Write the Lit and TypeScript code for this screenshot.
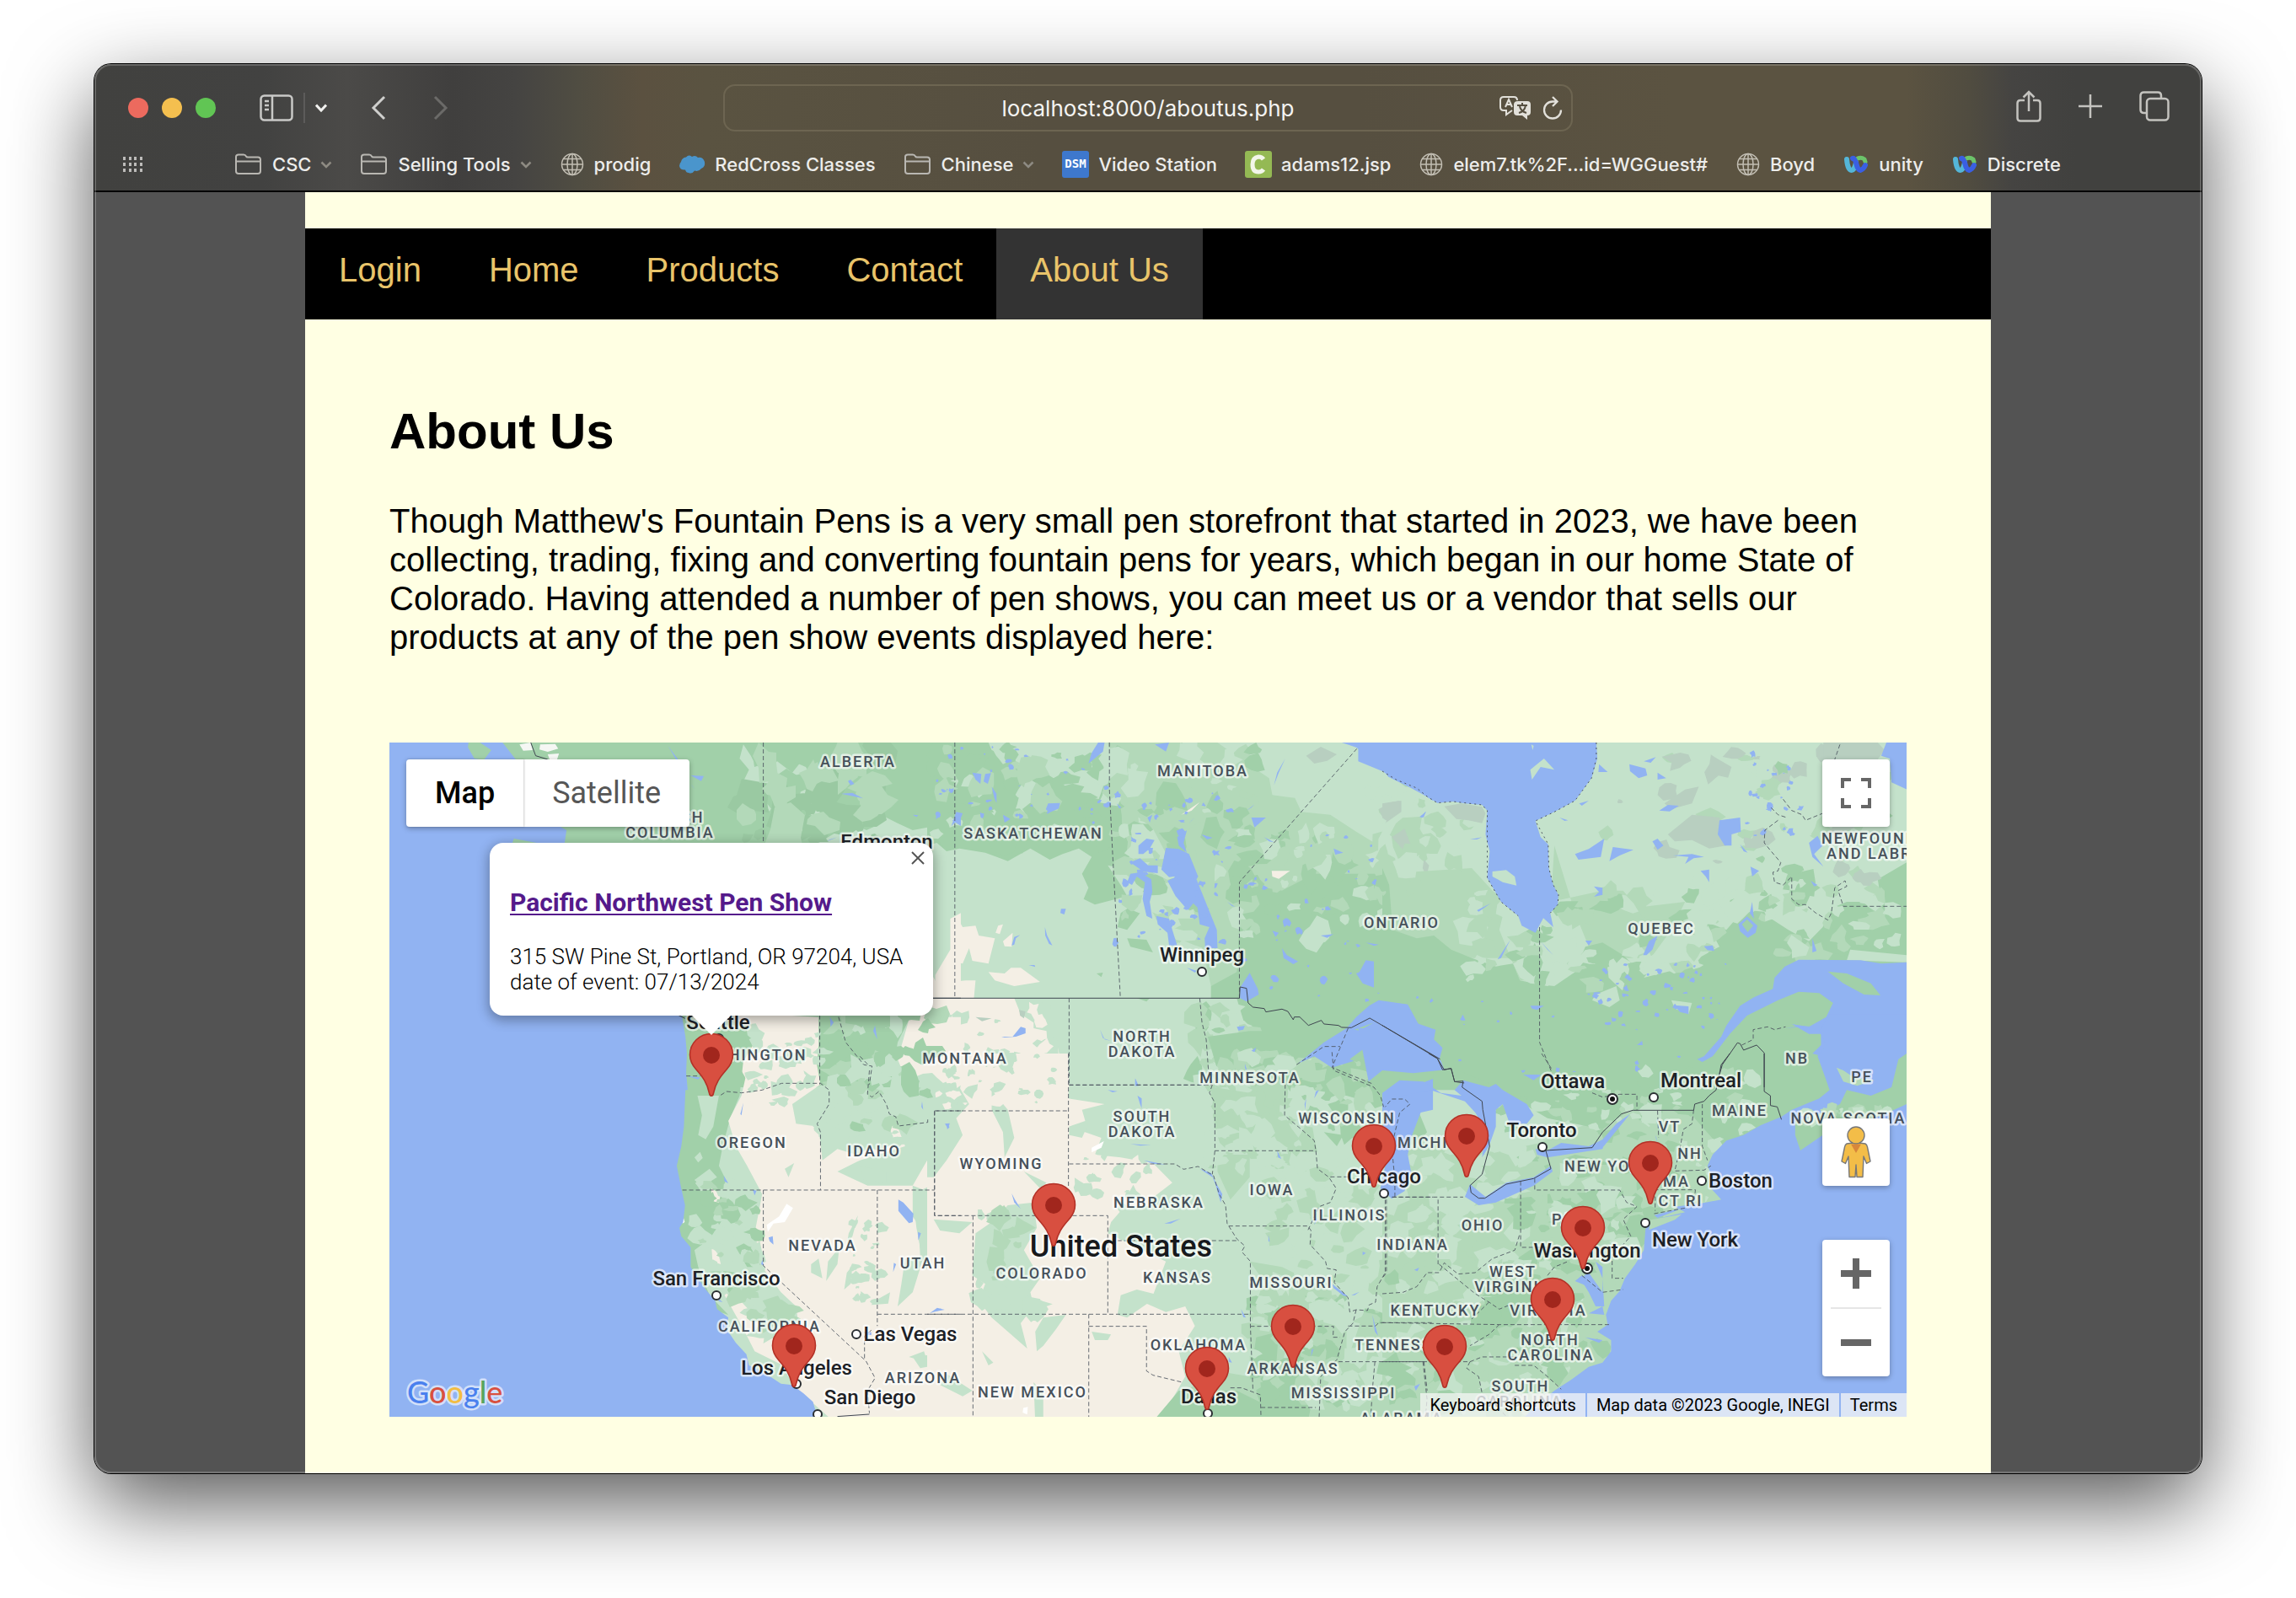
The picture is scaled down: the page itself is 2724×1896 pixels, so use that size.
import { LitElement, html, svg, css } from "lit";
import { customElement } from "lit/decorators.js";
import { classMap } from "lit/directives/class-map.js";

type Pt = [number, number];

const C = {
  water: "#91b3f2",
  light: "#c4e2cb",
  mid: "#b3d9b9",
  dark: "#a1d0a9",
  cream: "#f4efe5",
  grey: "#b8cfc0",
};

/* Small irregular patches that give the terrain its mottled look. */
function patches(seed: number, count: number, area: number[], size: number, colors: string[]) {
  let s = seed;
  const rnd = () => {
    s = (s * 16807) % 2147483647;
    return s / 2147483647;
  };
  const [x, y, w, h] = area;
  const out: Record<string, string> = {};
  for (let i = 0; i < count; i++) {
    const cx = x + rnd() * w;
    const cy = y + rnd() * h;
    const r = size * (0.3 + rnd());
    const stretch = 0.5 + rnd();
    const color = colors[Math.floor(rnd() * colors.length)];
    let d = "";
    for (let k = 0; k < 9; k++) {
      const a = (k / 9) * Math.PI * 2;
      const q = r * (0.45 + rnd() * 0.75);
      d += `${k ? "L" : "M"}${Math.round(cx + Math.cos(a) * q)} ${Math.round(cy + Math.sin(a) * q * stretch)}`;
    }
    out[color] = (out[color] ?? "") + d + "Z";
  }
  return Object.entries(out).map(([c, d]) => svg`<path fill=${c} d=${d}/>`);
}

const fill = (color: string, d: string) => svg`<path fill=${color} d=${d}/>`;
const dashed = (d: string) => svg`<path class="border" d=${d}/>`;
const solid = (d: string) => svg`<path class="nation" d=${d}/>`;

/* The map is drawn in three columns, each with an upper and a lower sheet. */
const WEST = "translate(-22 -11) scale(.4464 .3333)";
const WEST_S = "translate(-22 369) scale(.4464 .3333)";
const MID = "translate(638 -11) scale(.3827 .3333)";
const MID_S = "translate(638 369) scale(.3827 .3333)";
const EAST = "translate(1178 -11) scale(.4082 .3333)";
const EAST_S = "translate(1178 369) scale(.4082 .3333)";

const terrain = svg`
  <rect width="1800" height="800" fill=${C.light}/>
  <g transform=${WEST}>
    ${fill(C.dark, "M0 0H1568V340L1500 330L1440 345L1400 320L1370 300L1330 250L1330 330L1240 350L1190 390L1300 620L1420 760L1440 900L1500 943L1440 960L1430 1020L1400 1100L1380 1260H780Z")}
    ${fill(C.light, "M1050 130L1080 100L1120 140L1150 90L1190 100L1200 190L1240 185L1230 260L1210 300L1170 290L1170 250L1110 260L1060 280L1040 230L1070 200L1010 190L985 185L1005 130L980 90L990 40L1010 80Z")}
    ${fill(C.cream, "M1170 200L1190 210L1210 205L1205 225L1180 232Z M960 1004H1110L1190 1010L1190 1110L1180 1260H1010L980 1190L1020 1100L1000 1050Z M1430 1020L1500 960L1500 860L1540 770L1540 660L1568 640V1260H1430L1400 1160Z")}
  </g>
  <g transform=${MID}>
    ${fill(C.dark, "M0 33H190L200 60L270 90L300 150L350 130L420 180L470 230L560 180L600 33H700L720 200L640 300L640 420L600 480L560 470L600 540L620 580L520 610L485 590L500 550L480 500L510 440L470 410L420 430L380 450L320 410L250 455L180 425L100 410L60 420L30 390L0 400Z")}
    ${fill(C.mid, "M560 33H900L970 90L1060 160L1070 220L1140 230L1160 280L1250 290L1330 350L1400 400L1440 470L1440 540L1470 600L1568 620V1260H1000L880 1000L880 900L820 600L700 340L600 250Z")}
    ${fill(C.dark, "M1000 540L1100 560L1200 500L1430 500L1440 560L1470 640L1568 700V1260H1000L880 960L880 900L960 850L970 640Z M600 640L640 610L660 640L620 700L590 690Z M620 730L680 735L700 780L630 760Z M525 855L545 852L540 868Z M650 943H690L680 955Z")}
    ${patches(7, 90, [30, 45, 560, 340], 42, [C.dark, C.mid, C.light, C.dark])}
    ${patches(11, 90, [580, 45, 450, 700], 44, [C.dark, C.mid, C.light, C.mid])}
    ${patches(19, 60, [960, 350, 480, 380], 38, [C.dark, C.mid, C.light])}
    ${patches(23, 16, [1380, 200, 180, 420], 40, [C.light, C.mid])}
    ${fill(C.grey, "M1175 80L1220 48L1270 75L1240 98L1200 108Z M1400 270L1440 245L1470 240L1470 280L1420 320Z M1440 370L1480 340L1510 430L1480 420Z M1540 450L1556 470L1548 510L1536 480Z M1510 560L1525 510L1545 570L1520 590Z")}
    ${fill(C.cream, "M95 660L110 690L150 685L160 720L210 730L190 820L140 810L130 765L110 820L70 810L85 770L75 710Z M190 850L240 855L260 835L290 835L350 885L270 900L210 880Z M235 740L265 710L262 760L240 758Z M220 685L235 680L225 715L212 710Z M1068 490L1125 490L1090 518L1070 510Z M788 290L845 245L820 275Z M0 830L30 890L120 880L150 880L145 943H270L290 1000L330 1030L330 1050L370 1060L375 1140L400 1090L420 1200L440 1210V1270H0Z")}
    ${patches(31, 34, [10, 970, 390, 280], 26, [C.light, C.light, C.cream])}
    ${fill(C.grey, "M285 985L305 990L300 1015L288 1005Z M150 1010L200 1015L170 1025Z")}
    ${fill(C.light, "M820 945H960L980 1020L1000 1260H870L850 1050Z")}
    ${patches(37, 40, [830, 960, 180, 290], 34, [C.light, C.mid, C.dark])}
  </g>
  <g transform=${EAST}>
    ${fill(C.mid, "M260 480L320 560L360 600L340 700L400 880L500 880L600 760L560 640L500 400L490 600L640 560L700 560L740 620L880 600L840 700L780 800L0 800L30 700L0 500Z")}
    ${fill(C.dark, "M0 480L20 540L30 700L100 730L150 720L200 770L260 800L330 830L380 820L400 880L480 900L560 850L590 760L640 745L700 790L760 860L870 830L930 790L980 760L940 670L1000 700L1050 630L1130 660L1180 700L1240 740L1280 690L1310 620L1350 600L1450 600L1440 520L1524 460V1270H0Z")}
    ${fill(C.light, "M380 820L430 790L520 800L560 850L500 900L430 890L400 870Z M620 930L680 900L690 950L660 975L610 950Z M840 950L900 960L890 1000L850 980Z M780 840L880 780L890 830L760 870Z M1360 770L1524 790V815L1350 808Z M1060 120L1090 160L1080 90Z")}
    ${patches(41, 70, [250, 560, 700, 330], 38, [C.light, C.mid, C.dark, C.light])}
    ${patches(43, 18, [650, 60, 560, 460], 36, [C.grey, C.grey, C.mid])}
    ${patches(47, 60, [900, 520, 600, 280], 36, [C.dark, C.mid, C.light])}
    ${patches(53, 16, [0, 160, 290, 420], 34, [C.mid, C.light])}
    ${patches(59, 26, [1060, 60, 450, 460], 28, [C.grey, C.mid, C.dark])}
    ${fill(C.grey, "M830 360L900 290L980 300L1000 400L950 410L900 380L850 385Z M820 250L880 200L920 190L900 250L840 270Z M1282 33H1440L1460 60L1440 93H1282Z M180 260L230 250L290 262L300 285L290 320L250 310L215 305Z M0 250L50 240L50 280L10 310L0 300Z")}
  </g>
  <g transform=${WEST_S}>
    ${fill(C.dark, "M760 -100H1000L980 150L955 230L935 330L925 400L940 440L950 560L920 620L900 660L860 700L870 760L900 860L950 930L880 900L800 600Z M970 690L1000 670L1040 760L1000 760Z M1220 -60L1320 -40L1330 60L1310 140L1260 150L1210 60Z")}
    ${fill(C.light, "M868 150L925 150L910 260L890 305L870 290L880 220Z M860 370L875 350L882 372L870 388Z M860 450L900 410L920 440L880 475Z")}
    ${fill(C.cream, "M985 150L1000 60L1020 0H1180L1195 110L1120 180L1130 250L1190 260L1200 380L1240 340L1290 360L1340 330L1340 240L1400 260L1420 330L1300 380L1240 420L1320 470L1440 470L1500 330L1500 200L1568 190V420L1440 500L1450 620L1470 760L1568 840V1310H1230L1180 1250L1130 1195L1110 1120L1020 1060L990 980L940 860L955 840L1010 920L1080 1010L1140 1000L1130 900L1090 850L1040 760L1020 640L1040 500L1000 400L970 330L950 240Z M905 480L930 500L925 530L905 525Z M905 680L925 720L930 750L908 740Z M1450 -130H1568V60L1480 20L1440 -20Z")}
    ${fill(C.light, "M1440 470L1500 500L1568 560V620L1500 640L1500 700L1460 720L1455 610L1440 580Z M1420 730L1470 720L1440 850L1400 900L1410 820Z M1270 640L1295 575L1280 650L1265 680Z M1170 750L1190 730L1200 800L1170 780Z M1215 740L1245 690L1240 750L1210 810Z M1265 780L1280 755L1275 820L1258 840Z M1100 410L1125 390L1110 440Z M1300 400L1370 420L1370 460L1310 450Z M1340 880L1380 850L1375 890L1330 895Z M1440 1080L1500 1070L1500 1110L1460 1120Z M1430 1080L1470 1060L1480 1100Z M1150 60L1180 90L1160 110Z M960 600L1030 640L1020 700L960 650Z")}
    ${patches(61, 50, [1010, -80, 190, 260], 22, [C.light, C.cream, C.light])}
    ${patches(67, 50, [1200, 20, 220, 300], 28, [C.light, C.mid, C.light, C.dark])}
    ${patches(71, 60, [860, 460, 170, 420], 26, [C.light, C.mid, C.dark, C.light])}
    ${patches(73, 26, [1280, 600, 80, 280], 16, [C.light])}
    ${patches(79, 16, [1010, 860, 120, 140], 30, [C.light, C.mid])}
    ${fill("#ffffff", "M1105 535L1122 550L1100 600L1070 605L1055 635L1052 610L1085 580Z M830 580L834 600L828 605Z")}
  </g>
  <g transform=${MID_S}>
    ${fill(C.cream, "M0 0H438V160L550 180L480 200L490 240L440 260L540 300L520 360L600 370L700 390L760 460L680 530L600 560L570 600L560 640L740 740L700 860L640 870L740 920L800 900L830 970L780 1060L800 1150L760 1230L700 1310H0Z")}
    ${fill(C.light, "M0 130L60 100L100 120L130 180L90 230L110 290L60 380L20 440L0 440Z M200 130L250 200L270 300L240 370L235 280L200 200Z M20 590L140 600L100 640L40 630Z M150 640L200 600L250 540L330 530L340 620L300 700L350 800L320 850L330 900L290 960L310 1050L260 1000L200 940L160 880L180 820L140 790Z M360 940L430 930L400 980L360 1040L340 1060L335 990Z M300 420L370 460L350 480Z M600 860L650 840L720 860L620 940L590 930Z M510 990L570 1000L560 1020L520 1020Z M170 1060L205 1100L190 1110Z M330 1170L360 1210V1310H335Z M60 1140L140 1200L110 1220L40 1180Z M440 260L500 250L480 300L440 290Z")}
    ${patches(83, 50, [0, 0, 400, 190], 22, [C.light, C.light, C.cream])}
    ${patches(89, 34, [160, 570, 180, 350], 34, [C.mid, C.light, C.light])}
    ${patches(97, 26, [470, 360, 220, 200], 22, [C.light, C.cream])}
    ${fill(C.mid, "M890 120L1000 140L1060 60L1120 100L1180 160L1200 300L1210 350H890Z M900 360H1000L1000 440L940 520L900 420Z M1000 740L1100 760L1260 850L1300 900L1300 1310H700L760 1230L900 1130L1000 1150L1000 980L1060 990L1100 900Z M1380 740L1568 700V1310H1200L1300 1100L1360 900Z M1400 540L1568 520V620L1420 650Z")}
    ${fill(C.dark, "M870 -60L1000 -80L1568 -80V150L1420 190L1300 150L1200 130L1180 60L1110 100L1000 60L900 60Z M1150 860L1240 870L1250 950L1170 980L1140 920Z M1020 1010L1090 990L1080 1140L1000 1160Z M700 1310L780 1200L960 1200L1030 1240L1050 1150L1150 1140L1200 1200L1180 1310Z M1230 280L1290 290L1270 330Z")}
    ${patches(101, 110, [880, 0, 320, 420], 36, [C.mid, C.light, C.mid])}
    ${patches(103, 90, [1040, 420, 360, 420], 36, [C.mid, C.light, C.light])}
    ${patches(107, 110, [1010, 860, 540, 420], 40, [C.dark, C.mid, C.light])}
    ${patches(109, 30, [1120, 0, 280, 280], 36, [C.dark, C.mid])}
    ${fill("#ffffff", "M510 335L548 312L540 335L510 352Z M298 1262L312 1258L310 1285L296 1278Z")}
  </g>
  <g transform=${EAST_S}>
    ${fill(C.mid, "M0 300L240 300L300 360L450 320L700 200L1160 0V600L700 1300H0Z")}
    ${fill(C.dark, "M0 -120H1524V260L1180 220L1100 260L980 330L900 220L720 200L640 270L480 230L300 100L220 60L0 60Z M480 500L700 490L700 560L620 640L480 600Z M0 180L100 190L130 280L60 380L0 370Z M240 940L300 850L380 740L440 690L480 720L400 830L460 830L390 960L270 1060L130 1180L100 1120Z M470 400L560 360L640 380L600 440L490 450Z")}
    ${patches(113, 110, [20, 330, 400, 400], 40, [C.mid, C.light, C.light, C.mid])}
    ${patches(127, 170, [0, 720, 640, 560], 40, [C.dark, C.mid, C.light, C.mid])}
    ${patches(131, 90, [400, 360, 380, 420], 36, [C.dark, C.mid, C.light, C.mid])}
    ${patches(137, 60, [760, 60, 320, 520], 28, [C.dark, C.mid, C.light])}
    ${patches(139, 40, [330, 130, 460, 170], 26, [C.dark, C.mid, C.light])}
  </g>
  ${patches(149, 60, [420, 10, 160, 110], 22, ["#9ac9a2", C.dark, C.mid, "#9ac9a2"])}
  ${patches(151, 46, [520, 310, 130, 110], 16, [C.dark, C.mid, C.light])}
`;

const water = svg`
  <g transform=${WEST}>
    ${fill(C.water, "M0 0H262L258 50L275 90L300 95L320 60L290 33H350L385 93L400 200L500 330L520 345L515 390L480 400L380 375L375 395L600 500L700 700L760 900L818 1004L805 1045L818 1090L832 1150L838 1210L842 1270H0Z M1250 215L1280 212L1308 232Z M1268 170L1275 165L1285 180L1275 185Z M790 45L820 100L812 95Z M850 150L885 152L878 170Z M850 180L862 200L855 190Z M1440 290L1455 292L1450 298Z M1545 310L1568 300V330Z M1220 1010L1230 1030L1222 1045Z M1340 1040L1346 1090L1335 1060Z M1212 385L1240 370L1220 378Z")}
    ${fill("#f5f7f4", "M395 40L425 33L430 60L405 62Z M450 40L490 38L498 55L470 66L448 58Z M470 75L500 72L495 93H475Z")}
  </g>
  <g transform=${MID}>
    ${fill(C.water, "M1285 33H1568V240L1540 220L1500 195L1430 155L1405 120L1380 90L1330 50Z M740 408L780 412L812 430L840 510L835 520L898 700L900 765L862 765L860 730L875 690L845 680L838 620L825 605L808 630L770 580L745 525L778 508L750 512L726 485Z M620 530L630 500L660 495L695 520L698 565L690 600L698 660L680 650L668 590L675 530L650 510L635 540Z M630 460L660 445L685 470L715 470L715 498L670 492Z M710 650L750 660L760 700L775 755L750 755L745 710L715 680Z M655 400L680 375L705 380L690 410L670 430L655 430Z M775 370L805 345L795 390L805 425L780 400Z M1150 1175L1230 1100L1300 1050L1330 1010L1370 970L1400 950L1490 965L1530 1050L1568 1055V1200L1480 1200L1420 1190L1380 1150L1340 1160L1255 1190L1200 1150Z M970 905L1000 853L1025 910L1028 930L990 955L970 943Z M1340 850L1360 808L1385 812L1385 905L1350 890L1330 855Z")}
    ${fill(C.water, "M140 140L168 145L165 180L150 165Z M180 145L198 142L188 180L175 172Z M200 190L215 215V248L208 230Z M375 250L412 248L408 268L378 283L368 270Z M235 290L258 305L240 318Z M90 280L110 285L105 300L80 325L75 330Z M530 33H550L545 65L500 108L510 70Z M706 40L750 33L740 65L720 50Z M990 275L1015 253L1005 265Z M1005 300L1050 300L1015 335Z M850 360L885 372L868 378Z M1045 370L1075 388L1060 385Z M1260 410L1290 425L1265 432Z M1075 185L1085 140L1110 90L1090 140Z M415 625L430 625L425 645L413 640Z M365 690L372 720L388 755L378 750L366 720Z M262 755L270 725L288 718L275 730L270 752Z M315 825H333L335 832Z M230 1080L265 1080L290 1045L305 1050V1068L275 1080L240 1083Z M536 1055L545 1085L570 1095L550 1090Z M645 1230L655 1255H645Z M960 1045L985 1042L980 1055L965 1058Z M1100 765L1115 790L1150 812L1135 822L1105 800Z M1070 703L1090 710L1080 725Z M930 600L955 618L945 615Z M805 835L835 845L830 852Z M588 250L602 265L595 268Z M683 300L698 290L690 318Z M820 310L830 300L810 322Z M1530 300L1545 278L1540 298Z M1360 745L1400 752L1385 757Z M1005 1130L1020 1118L1015 1135Z M1220 720L1260 715L1240 728Z M985 1175L990 1200L985 1190Z")}
    ${patches(163, 40, [30, 45, 560, 280], 10, [C.water])}
    ${patches(167, 50, [580, 200, 360, 560], 11, [C.water])}
    ${patches(173, 34, [980, 340, 420, 620], 10, [C.water])}
    ${fill(C.dark, "M1310 1160L1380 1100L1405 1105L1380 1150L1330 1170Z M1325 1055L1385 1030L1340 1058Z")}
  </g>
  <g transform=${EAST}>
    ${fill(C.water, "M-70 33H622L625 90L608 160L560 240L500 280L445 312L460 370L482 395L484 480L497 540L512 575L510 610L488 640L497 690L468 658L445 710L405 685L395 650L345 600L305 515L312 420L300 360L305 275L290 255L240 250L205 243L160 248L130 225L100 195L40 165L0 135L-70 100Z M0 955L70 965L95 1030L155 1055L150 1090L175 1120L165 1165L120 1195L0 1195Z M1524 815L1450 820L1390 808L1210 806L1170 830L1140 870L1135 910L1080 940L1040 970L1000 1040L985 1080L935 1150L915 1160L930 1170L960 1150L1010 1070L1060 1005L1150 950L1210 920L1270 925L1310 960L1290 1010L1240 1045L1190 1035L1240 1070L1275 1070L1275 1110L1250 1140L1280 1150L1280 1200L1310 1270H1524Z M1465 33H1524V200L1480 175L1475 90L1450 80Z")}
    ${fill(C.water, "M560 430L600 412L645 375L635 440L570 450Z M660 455L670 405L730 415L690 435Z M718 110L765 125L770 150L745 160L720 135Z M760 100L795 85L780 105Z M980 310L1040 300L1042 350L1015 360L1015 400L995 400L975 360Z M805 275L830 255L862 258L835 278Z M785 385L800 375L817 400L800 415Z M845 435L900 430L935 440L905 445L880 465L890 440Z M925 490L950 485L950 530L940 510Z M615 545L640 550L640 575L615 582L630 565Z M1240 390L1265 365L1280 400L1255 430L1282 475L1250 440Z M1035 680L1060 652L1090 685L1085 710L1062 728L1040 705Z M758 790L775 740L800 720L785 770L768 790Z M848 968L890 972L890 1000L865 992Z M1245 525L1265 540L1255 545Z M935 758L960 755L965 775L945 772Z M275 630L315 605L280 635Z M335 805L372 735L345 800Z M460 740L497 790L480 770Z M430 970H470L450 985L435 980Z M255 378L290 370L275 378Z M108 298L128 278L118 300Z M572 250L600 240L580 258Z M515 300L540 310L530 312Z M1070 475L1095 490L1075 510Z M590 738L610 738L600 755Z M630 110L655 138L628 138Z M1075 600L1080 660L1068 640Z M1250 730L1262 775L1250 780Z M1260 1040L1170 1050L1200 1045Z M800 140L825 160L800 165Z M1040 395L1062 425L1050 420Z M740 1110L755 1095L757 1110Z M410 1215L460 1215L440 1235Z")}
    ${patches(179, 40, [600, 820, 400, 200], 9, [C.water])}
    ${patches(181, 24, [1060, 60, 160, 320], 9, [C.water])}
    ${patches(191, 26, [100, 900, 900, 320], 7, [C.water])}
    ${fill(C.dark, "M1295 848L1350 855L1420 890L1448 933L1400 930L1340 890Z M1045 680L1060 662L1078 685L1062 708Z")}
    ${fill(C.light, "M320 492L360 487L385 510L390 542L350 530L320 510Z M430 130L470 90L500 130L460 120L435 165Z M433 40L440 45L437 60Z")}
  </g>
  <g transform=${WEST_S}>
    ${fill(C.water, "M0 -150H825L836 -60L840 0L832 260L825 330L813 400L825 480L835 540L830 600L820 620L825 650L850 690L850 760L890 840L915 880L920 910L950 940L945 980L970 1030L998 1070L1005 1110L1050 1140L1090 1175L1120 1180L1150 1210L1175 1240L1190 1310H0Z M1402 520L1415 530L1442 570L1440 600L1430 604L1402 560Z M1057 655L1068 650L1070 680L1060 668Z M938 435L950 462L940 455Z M990 175L985 220L982 215Z M1465 170L1468 200L1463 190Z M1530 250L1538 262L1532 270Z M1390 745L1396 750L1388 778Z M1454 635L1462 640L1455 665Z M1040 735L1045 755L1037 750Z M1485 925L1505 905L1525 912L1500 918Z M1015 485L1025 488L1020 505Z M920 868L935 885L925 882Z M1310 990L1330 992V1002H1315Z M875 85L840 80L870 92Z")}
  </g>
  <g transform=${MID_S}>
    ${fill(C.water, "M1420 190L1450 140L1500 120L1568 90V200L1530 210L1500 300L1490 360L1500 420L1480 490L1440 517L1405 480L1420 400L1410 300Z M845 410L880 425L900 470L915 500L910 530L895 470L885 440Z M652 150L665 160V195L660 180Z M560 130L590 134L575 138Z M645 88L655 115H645Z M630 322L695 326L660 328Z M672 380L740 395L700 392Z M735 605L785 588L755 605Z M262 498L272 520L290 553L270 530Z M55 250L70 248L65 268Z M1255 820L1305 865L1290 862L1260 835Z M1315 860L1340 848L1325 860Z M973 910L988 940L980 938Z M1085 345L1098 375L1088 370Z M1200 610L1210 590L1205 585Z M1205 135L1215 130L1200 160Z M1380 930L1398 1005L1388 990Z M1190 1080L1198 1050L1192 1055Z M935 1080L945 1100L935 1098Z M1350 705L1360 710L1350 718Z M1515 1200L1528 1175L1510 1185Z M1058 645L1062 670L1058 668Z M1510 770L1525 762L1520 775Z M985 40L992 60L987 55Z M20 920L45 905L35 915Z M1175 160L1172 200L1170 180Z")}
  </g>
  <g transform=${EAST_S}>
    ${fill(C.water, "M-70 -90H20L130 0L170 25L180 58L90 70L0 60L-40 100Z M0 140L50 95L120 100L170 140L230 150L210 130L235 95L310 120L330 108L350 130L420 180L440 220L420 250L370 250L350 180L330 200L330 260L310 330L290 370L300 270L270 210L240 170L140 130L60 150L0 210Z M240 510L255 465L290 500L300 510L360 460L440 440L490 400L495 420L440 470L330 530L280 540Z M445 340L480 345L520 318L600 330L650 300L640 340L560 355L480 370L450 360Z M630 320L680 250L720 215L640 335Z")}
    ${fill(C.water, "M1524 -140V1310H400L450 1250L500 1200L550 1160L600 1115L640 1100L665 1060L665 1020L625 990L655 965L650 930L665 880L690 845L705 800L735 750L760 700L765 625L790 590L880 565L850 545L920 535L985 520L955 480L960 440L945 400L960 360L1000 310L1050 290L1100 255L1160 225L1190 200L1230 180L1270 160L1300 130L1280 60L1265 10L1290 -30L1270 -80L1300 -140Z M600 780L640 850L640 760L620 740L640 800L645 900L620 900L600 850L575 800Z M640 900L645 930L600 925Z")}
    ${fill(C.water, "M790 575L870 550L850 562L800 585Z M460 80L430 75L440 90Z M580 790L640 850L560 810Z M795 290L800 320L795 300Z M640 1020L590 1010L630 1030Z")}
    ${fill(C.dark, "M1200 290L1200 240L1260 220L1330 180L1350 130L1420 150L1480 120L1500 20L1524 0V180L1470 210L1380 250L1280 290L1215 345Z")}
    ${fill(C.mid, "M1320 50L1340 60L1370 85L1430 95L1380 115L1340 100Z M780 592L870 572L850 592L775 628Z M655 870L690 800L700 780L690 840L660 885Z")}
    ${patches(193, 24, [1230, 190, 240, 60], 22, [C.light, C.mid])}
  </g>
`;

const borders = svg`
  <g transform=${WEST}>
    ${dashed("M1043 33V400 M1552 33V943 M1193 1004V1250 M1243 1010L1262 1100L1310 1180L1332 1185L1325 1250 M838 1220H875")}
    ${solid("M1490 943H1568 M818 1004L835 1015 M425 33L438 80L470 93")}
  </g>
  <g transform=${MID}>
    ${dashed("M565 33V200L575 430L599 943 M1332 55L968 530V943 M440 943V1252 M440 1252H884 M845 943L852 1030L865 1090L872 1200L884 1252 M1145 1180L1230 1115H1280 M1305 1050L1255 1190L1385 1250")}
    ${solid("M0 943H968L970 903L990 908L995 960L1010 975L1045 980L1050 992L1100 982L1118 990L1135 1020L1138 1010L1155 1010L1182 1040L1222 1022L1230 1035L1275 1040L1285 1047L1315 1048L1372 1014L1590 1160")}
  </g>
  <g transform=${EAST}>
    ${dashed("M457 690V1100L495 1215 M1330 40L1315 93 M1165 235L1190 275L1220 290L1230 310L1280 285 M1130 265L1150 290L1175 300 M1150 310L1112 345L1110 390L1130 420L1158 460L1150 490L1135 495L1140 530L1165 540L1190 510V590L1210 610L1230 610L1260 640L1295 665L1305 640L1315 550L1345 525L1350 545L1325 560L1340 616H1524 M1045 1110L1078 1090V1055L1120 1045L1140 1055L1172 1045")}
    <path class="coast" d="M622 33V90L608 160L560 240L500 280L445 312L482 395L484 480L497 540L512 575L510 610L488 640 M0 135L40 165L100 195L130 225L160 248L205 243L290 255L305 275L305 515L345 600L395 650"/>
    ${solid("M0 1040L160 1157L175 1198L200 1193L210 1240L238 1245 M980 1215L988 1180L1032 1102L1040 1105L1050 1128L1088 1110L1110 1138V1260")}
  </g>
  <g transform=${WEST_S}>
    ${dashed("M930 148L945 135L985 140L1040 130L1092 106H1195L1218 130V180L1186 250L1195 280V486 M828 486H1498 M1043 486V755L1316 1095L1340 1155L1320 1200L1325 1280 M1346 486V970 M1346 928H1568 M1568 204H1498V577H1568 M1325 60L1320 145L1332 155L1350 135L1370 180L1378 215L1395 225L1402 258L1480 245V230 M1300 10L1325 45 M1330 985L1312 1005V1090")}
    ${solid("M1240 1292L1325 1284")}
  </g>
  <g transform=${MID_S}>
    ${dashed("M23 204H440 M438 0V480 M23 204V577H560V928 M142 577V1300 M0 928H1002 M440 393H768L795 412L840 402L888 435L905 500L925 540L930 605L960 660L985 685L975 705L1002 740V970L1010 1200 M590 666H960 M501 928V1300 M501 971H680V1130L700 1145L790 1170 M940 1190L975 1190L1033 1215L1035 1300 M1035 1260H1205 M884 112L875 140L892 175V346H1205 M892 346L884 430 M935 614H1180L1190 630L1187 680L1235 740L1240 765L1268 770L1262 815L1305 870L1310 920L1330 912L1365 915L1370 895L1390 885L1395 830L1420 780V520 M1205 346L1210 410L1245 440L1268 480L1250 530L1215 545L1180 630 M1110 110L1108 220L1160 270L1200 310L1205 346 M1250 439H1310 M1440 511H1568 M1002 971H1260L1258 1010H1280 M1305 970H1390L1400 958H1568 M1330 912L1320 960L1295 990L1270 1090L1220 1150L1215 1300 M1275 1097H1540 M1388 1097L1380 1200L1375 1300 M1540 1097L1550 1200 M1450 510V450L1440 330L1465 210L1497 180L1480 162H1440L1420 190 M1255 -5L1260 60L1385 120L1405 150L1415 190 M440 112H884")}
  </g>
  <g transform=${EAST_S}>
    ${dashed("M30 511L235 511 M162 520V750 M12 520V780L0 800 M402 455V690H520 M443 445V486H690L710 530L740 545L700 590L722 650L700 680 M0 855L60 850L100 830L130 780L165 780L180 745L220 785L270 780L320 730L385 700L400 640 M0 958L340 965H662 M165 750L270 855L310 885L340 910L370 895 M310 885L260 945 M340 965L310 1000L255 1040 M0 1097L255 1097L290 1080H390 M118 1097L130 1230L125 1300 M255 1097L245 1120L280 1150L290 1210L330 1250L360 1292 M385 1110H440L480 1150L520 1195 M463 0L495 60 M610 140L640 155L690 145L740 145V200 M800 203L803 300 M905 200L900 250L875 270L865 340L850 418L935 415L955 400 M930 180L930 330L945 380 M790 485H910L905 540 M790 570L880 550 M793 485V560 M668 690V800H700 M580 790L640 850L700 840 M480 790L500 760L540 740")}
    ${solid("M135 0L160 18L180 58L200 53L210 100L235 98L232 120L290 170L292 200L312 330L290 430L255 470L258 495L280 515H298L360 465L440 445L490 410L475 345L610 335L640 280L695 215L728 202H905L908 180L935 170L950 150L970 130L985 40L1010 0 M1110 0V135L1128 150V185L1148 190L1160 235")}
  </g>
`;

type Kind = "state" | "city" | "nation";
interface Label { t: string; x: number; y: number; k?: Kind; a?: "start" }

const LABELS: Label[] = [
  { t: "ALBERTA", x: 556, y: 29 }, { t: "BRITISH", x: 333, y: 95 }, { t: "COLUMBIA", x: 333, y: 113 },
  { t: "WASHINGTON", x: 427, y: 377 }, { t: "MANITOBA", x: 965, y: 40 }, { t: "SASKATCHEWAN", x: 764, y: 114 },
  { t: "ONTARIO", x: 1201, y: 220 }, { t: "NORTH", x: 893, y: 355 }, { t: "DAKOTA", x: 893, y: 373 },
  { t: "MONTANA", x: 683, y: 381 }, { t: "MINNESOTA", x: 1021, y: 404 }, { t: "QUEBEC", x: 1509, y: 227 },
  { t: "NEWFOUNDLAND", x: 1699, y: 120, a: "start" }, { t: "AND LABRADOR", x: 1705, y: 138, a: "start" },
  { t: "NB", x: 1670, y: 381 }, { t: "PE", x: 1747, y: 403 }, { t: "OREGON", x: 430, y: 481 },
  { t: "IDAHO", x: 575, y: 491 }, { t: "NEVADA", x: 514, y: 603 }, { t: "UTAH", x: 633, y: 624 },
  { t: "CALIFORNIA", x: 451, y: 699 }, { t: "ARIZONA", x: 633, y: 760 }, { t: "SOUTH", x: 893, y: 450 },
  { t: "DAKOTA", x: 893, y: 468 }, { t: "WYOMING", x: 726, y: 506 }, { t: "NEBRASKA", x: 913, y: 552 },
  { t: "COLORADO", x: 774, y: 636 }, { t: "KANSAS", x: 935, y: 641 }, { t: "IOWA", x: 1047, y: 537 },
  { t: "WISCONSIN", x: 1136, y: 452 }, { t: "ILLINOIS", x: 1139, y: 567 }, { t: "MISSOURI", x: 1070, y: 647 },
  { t: "OKLAHOMA", x: 960, y: 721 }, { t: "ARKANSAS", x: 1072, y: 749 }, { t: "MISSISSIPPI", x: 1132, y: 778 },
  { t: "NEW MEXICO", x: 763, y: 777 }, { t: "ALABAMA", x: 1201, y: 808 }, { t: "TENNESSEE", x: 1145, y: 721, a: "start" },
  { t: "KENTUCKY", x: 1241, y: 680 }, { t: "INDIANA", x: 1214, y: 602 }, { t: "MICHIGAN", x: 1196, y: 481, a: "start" },
  { t: "OHIO", x: 1297, y: 579 }, { t: "NEW YORK", x: 1394, y: 509, a: "start" }, { t: "VT", x: 1519, y: 462 },
  { t: "MAINE", x: 1602, y: 443 }, { t: "NOVA SCOTIA", x: 1731, y: 452 }, { t: "NH", x: 1543, y: 494 },
  { t: "MA", x: 1527, y: 527 }, { t: "CT RI", x: 1532, y: 550 }, { t: "PA", x: 1379, y: 572, a: "start" },
  { t: "WEST", x: 1333, y: 634 }, { t: "VIRGINIA", x: 1333, y: 652 }, { t: "VIRGINIA", x: 1375, y: 680 },
  { t: "NORTH", x: 1377, y: 715 }, { t: "CAROLINA", x: 1378, y: 733 }, { t: "SOUTH", x: 1342, y: 770 },
  { t: "CAROLINA", x: 1341, y: 788 },
  { t: "Edmonton", x: 590, y: 126, k: "city" }, { t: "Seattle", x: 390, y: 340, k: "city" },
  { t: "Winnipeg", x: 964, y: 260, k: "city" }, { t: "Ottawa", x: 1404, y: 410, k: "city" },
  { t: "Montreal", x: 1556, y: 409, k: "city" }, { t: "Toronto", x: 1367, y: 468, k: "city" },
  { t: "Boston", x: 1603, y: 528, k: "city" }, { t: "New York", x: 1549, y: 598, k: "city" },
  { t: "Washington", x: 1421, y: 611, k: "city" }, { t: "Chicago", x: 1180, y: 523, k: "city" },
  { t: "Dallas", x: 972, y: 784, k: "city" }, { t: "San Francisco", x: 388, y: 644, k: "city" },
  { t: "Las Vegas", x: 618, y: 710, k: "city" }, { t: "Los Angeles", x: 483, y: 750, k: "city" },
  { t: "San Diego", x: 570, y: 785, k: "city" }, { t: "United States", x: 868, y: 610, k: "nation" },
];

const TOWNS: Pt[] = [
  [391, 351], [964, 272], [1500, 421], [1368, 480], [1557, 520], [1490, 570], [1180, 535],
  [971, 796], [388, 656], [554, 702], [483, 761], [508, 797],
];
const CAPITALS: Pt[] = [[1451, 423], [1421, 624]];

const PINS: { name: string; x: number; y: number }[] = [
  { name: "Portland", x: 382, y: 420 },
  { name: "Detroit", x: 1278, y: 516 },
  { name: "Chicago", x: 1168, y: 528 },
  { name: "Danbury", x: 1496, y: 548 },
  { name: "Denver", x: 788, y: 598 },
  { name: "Washington", x: 1416, y: 625 },
  { name: "Raleigh", x: 1380, y: 710 },
  { name: "Little Rock", x: 1072, y: 742 },
  { name: "Los Angeles", x: 480, y: 765 },
  { name: "Atlanta", x: 1252, y: 766 },
  { name: "Dallas", x: 970, y: 792 },
];

@customElement("pen-map")
export class PenMap extends LitElement {
  static styles = css`
    :host { display: block; position: relative; height: 800px; overflow: hidden; font-family: Roboto, sans-serif; background: #91b3f2; }
    * { box-sizing: border-box; }
    button { font: inherit; margin: 0; padding: 0; border: 0; background: none; cursor: pointer; display: grid; place-items: center; }
    .canvas { position: absolute; top: 0; left: 50%; width: 1800px; height: 800px; transform: translateX(-50%); }
    .canvas > svg { display: block; }
    .border, .nation, .coast { fill: none; stroke: #4d5560; vector-effect: non-scaling-stroke; }
    .border { stroke-width: 1px; stroke-dasharray: 5 3; opacity: .85; }
    .nation { stroke-width: 1px; stroke: #3f4650; }
    .coast { stroke-width: 1px; stroke-dasharray: 2 4; }
    .label { paint-order: stroke; stroke: rgba(255, 255, 255, .65); stroke-width: 5px; stroke-linejoin: round; text-anchor: middle; }
    .start { text-anchor: start; }
    .state { font-size: 18px; letter-spacing: 2px; fill: #46505a; font-weight: 500; }
    .city { font-size: 24px; fill: #1d2126; font-weight: 500; }
    .country { font-size: 36px; fill: #17191c; font-weight: 500; }
    .town { fill: #fff; stroke: #2b2f33; stroke-width: 2px; }
    .pin { position: absolute; width: 54px; height: 76px; margin: -76px 0 0 -27px; }
    .types { position: absolute; top: 20px; left: 20px; display: flex; background: #fff; border-radius: 4px; box-shadow: 0 2px 6px rgba(0, 0, 0, .3); font-size: 36px; line-height: 80px; }
    .types button { padding: 0 34px; height: 80px; color: #565656; }
    .types .on { color: #000; font-weight: 500; box-shadow: 1px 0 2px rgba(0, 0, 0, .2); }
    .side { position: absolute; right: 20px; width: 80px; background: #fff; border-radius: 4px; box-shadow: 0 2px 6px rgba(0, 0, 0, .3); }
    .side button { width: 80px; height: 80px; }
    .full { top: 20px; }
    .street { top: 446px; }
    .zoom { top: 590px; }
    .zoom hr { margin: 0 10px; border: 0; height: 2px; background: #e6e6e6; }
    .popup { position: absolute; left: 119px; top: 119px; width: 526px; padding: 53px 24px 23px; background: #fff; border-radius: 16px; box-shadow: 0 4px 14px 2px rgba(0, 0, 0, .3); color: #000; }
    .popup::after { content: ""; position: absolute; left: 50%; top: 100%; margin: -1px 0 0 -24px; width: 48px; height: 24px; background: #fff; clip-path: polygon(0 0, 100% 0, 50% 100%); }
    .popup h3 { margin: 0 0 31px; font-size: 30px; line-height: 36px; font-weight: 700; }
    .popup a { color: #551a8b; text-decoration-thickness: 2px; text-underline-offset: 3px; }
    .popup p { margin: 0 0 2px; font-size: 26px; line-height: 30px; font-weight: 300; white-space: nowrap; }
    .close { position: absolute; top: 2px; right: 2px; width: 32px; height: 32px; }
    .brand { position: absolute; left: 20px; bottom: 4px; }
    .brand svg { display: block; }
    .logo { font: 500 36px Lato, sans-serif; paint-order: stroke; stroke: rgba(255, 255, 255, .6); stroke-width: 5px; stroke-linejoin: round; }
    .credits { position: absolute; right: 0; bottom: 0; display: flex; gap: 2px; font-size: 20px; line-height: 28px; color: #000; }
    .credits > * { background: rgba(245, 245, 245, .75); padding: 0 11px; color: #000; text-decoration: none; height: 28px; display: block; }
  `;

  private label(l: Label) {
    const cls = { label: true, state: !l.k, city: l.k === "city", country: l.k === "nation", start: l.a === "start" };
    return svg`<text class=${classMap(cls)} x=${l.x} y=${l.y}>${l.t}</text>`;
  }

  render() {
    return html`
      <div class="canvas">
        <svg width="1800" height="800" viewBox="0 0 1800 800" aria-hidden="true">
          ${terrain}${water}${borders}
          ${TOWNS.map(([x, y]) => svg`<circle class="town" cx=${x} cy=${y} r="5"/>`)}
          ${CAPITALS.map(([x, y]) => svg`<circle class="town" cx=${x} cy=${y} r="6"/><circle cx=${x} cy=${y} r="3" fill="#111"/>`)}
          ${LABELS.map((l) => this.label(l))}
        </svg>
        ${PINS.map((p) => html`
          <button class="pin" aria-label=${p.name} style="left:${p.x}px;top:${p.y}px">
            <svg width="54" height="76" viewBox="0 0 54 76">
              <path d="M27 1.500C13 1.500 1.500 12.500 1.500 26.500C1.500 34 4.500 39 9 44C17 53 22 60 24.500 72C25 74.500 25.700 75.200 27 75.200S29 74.500 29.500 72C32 60 37 53 45 44C49.500 39 52.500 34 52.500 26.500C52.500 12.500 41 1.500 27 1.500Z" fill="#d84f40" stroke="#b33127" stroke-width="1.600"/>
              <circle cx="27" cy="27" r="10" fill="#a1261d"/>
            </svg>
          </button>`)}
        <section class="popup">
          <h3><a href="#pacific-northwest">Pacific Northwest Pen Show</a></h3>
          <p>315 SW Pine St, Portland, OR 97204, USA<br>date of event: 07/13/2024</p>
          <button class="close" aria-label="Close">
            <svg width="16" height="16" viewBox="0 0 16 16"><path d="M1 1L15 15M15 1L1 15" stroke="#555" stroke-width="2"/></svg>
          </button>
        </section>
      </div>
      <div class="types">
        <button class="on">Map</button>
        <button>Satellite</button>
      </div>
      <div class="side full">
        <button aria-label="Full screen">
          <svg width="36" height="36" viewBox="0 0 36 36"><path d="M0 12V0H12V4H4V12ZM24 0H36V12H32V4H24ZM0 24H4V32H12V36H0ZM32 24H36V36H24V32H32Z" fill="#666"/></svg>
        </button>
      </div>
      <div class="side street">
        <button aria-label="Street View">
          <svg width="36" height="62" viewBox="0 0 36 62">
            <g fill="#f3bd48" stroke="#777" stroke-width="1.400" stroke-linejoin="round">
              <path d="M7 21Q18 19 29 21Q31 22 31.500 25L35 42L30.500 44.500L27 36L26 60.500H19L18 46L17 60.500H10L9 36L5.500 44.500L1 42L4.500 25Q5 22 7 21Z"/>
              <circle cx="18" cy="11" r="10"/>
            </g>
            <path d="M12 21.500H24L18 32Z" fill="#d8863a"/>
          </svg>
        </button>
      </div>
      <div class="side zoom">
        <button aria-label="Zoom in">
          <svg width="36" height="36" viewBox="0 0 36 36"><path d="M14 0H22V14H36V22H22V36H14V22H0V14H14Z" fill="#666"/></svg>
        </button>
        <hr>
        <button aria-label="Zoom out">
          <svg width="36" height="8" viewBox="0 0 36 8"><rect width="36" height="8" fill="#666"/></svg>
        </button>
      </div>
      <a class="brand" href="#google" aria-label="Google">
        <svg width="124" height="46" viewBox="0 0 124 46">
          <text class="logo" x="1" y="34"><tspan fill="#4a80ee">G</tspan><tspan fill="#d9503f">o</tspan><tspan fill="#f2bd42">o</tspan><tspan fill="#4a80ee">g</tspan><tspan fill="#58a55c">l</tspan><tspan fill="#d9503f">e</tspan></text>
        </svg>
      </a>
      <div class="credits">
        <button>Keyboard shortcuts</button>
        <span>Map data ©2023 Google, INEGI</span>
        <a href="#terms">Terms</a>
      </div>
    `;
  }
}

const folder = html`<svg width="34" height="26" viewBox="0 0 34 26" fill="none" stroke="#b9b7b2" stroke-width="2"><path d="M2 21V4Q2 1.500 5 1.500H11Q13 1.500 14 3.500Q14.500 4.500 16 4.500H28Q31 4.500 31 7.500V21Q31 24 28 24H5Q2 24 2 21ZM2 9.500H31"/></svg>`;
const globe = html`<svg width="30" height="28" viewBox="0 0 30 28" fill="none" stroke="#c2beb3" stroke-width="1.500"><circle cx="15" cy="14" r="12.500"/><ellipse cx="15" cy="14" rx="6" ry="12.500"/><path d="M15 1.500V26.500M2.500 14H27.500M4.500 7.500H25.500M4.500 20.500H25.500"/></svg>`;
const cloud = html`<svg width="32" height="24" viewBox="0 0 32 24"><path d="M3 9Q4 4 9 3.500Q12 0 16 3Q20 .5 23 4Q29 3 31 9Q32 15 27 17Q24 21 19 19.500Q16 24 12 22Q9 22 8 18.500Q2 19 1 14Q1 11 3 9Z" fill="#4a95cc"/></svg>`;
const webex = html`<svg width="32" height="24" viewBox="0 0 32 24" fill="none" stroke-linecap="round" stroke-width="6"><path d="M5 6Q6 19 11 19Q14 19 16 10" stroke="#54b6d8"/><path d="M18 5Q22 3 26 6L27 9" stroke="#6cc36a" stroke-width="5"/><path d="M12 5Q14 4 16 10Q18 19 21 19Q25 18 27 13" stroke="#3a5fe2"/></svg>`;
const dsm = html`<svg width="32" height="32" viewBox="0 0 32 32"><rect width="32" height="32" rx="3" fill="#3e78cd"/><text x="16" y="20" text-anchor="middle" font-family="DejaVu Sans Mono, monospace" font-weight="700" font-size="14" fill="#fff">DSM</text></svg>`;
const adams = html`<svg width="32" height="32" viewBox="0 0 32 32"><rect width="32" height="32" rx="3" fill="#94b954"/><path d="M22 10Q20 7 16 7Q9 8 9 16Q9 25 16 25Q20 25 22 22" fill="none" stroke="#f3f6ea" stroke-width="5"/></svg>`;
const caret = html`<svg class="caret" width="14" height="9" viewBox="0 0 14 9" fill="none" stroke="#8d8a82" stroke-width="2.500"><path d="M1.500 1.500L7 7L12.500 1.500"/></svg>`;

const FAVORITES = [
  { icon: folder, text: "CSC", menu: true },
  { icon: folder, text: "Selling Tools", menu: true },
  { icon: globe, text: "prodig" },
  { icon: cloud, text: "RedCross Classes" },
  { icon: folder, text: "Chinese", menu: true },
  { icon: dsm, text: "Video Station" },
  { icon: adams, text: "adams12.jsp" },
  { icon: globe, text: "elem7.tk%2F...id=WGGuest#" },
  { icon: globe, text: "Boyd" },
  { icon: webex, text: "unity" },
  { icon: webex, text: "Discrete" },
];

@customElement("browser-chrome")
export class BrowserChrome extends LitElement {
  static styles = css`
    :host {
      display: block;
      border-bottom: 2px solid #050505;
      font-family: Inter, "Liberation Sans", sans-serif;
      color: #ededeb;
      background: linear-gradient(90deg, #41413f 0%, #424241 8%, #4b4a48 12%, #403f3e 17%, #454442 20%, #504d42 23%, #5b5140 26%, #5a5341 29%, #564f40 45%, #564f40 60%, #5b5341 75%, #5b5341 86%, #504c40 89%, #454442 91%, #41413f 94%);
    }
    * { box-sizing: border-box; }
    button { border: 0; padding: 0; margin: 0; background: none; color: inherit; font: inherit; display: grid; place-items: center; }
    .bar { display: grid; grid-template-columns: 1fr 1008px 1fr; align-items: center; height: 88px; padding: 16px 40px 0; }
    .left { display: flex; align-items: center; height: 40px; }
    .lights { display: flex; gap: 16px; margin-right: 52px; }
    .light { width: 24px; height: 24px; border-radius: 50%; }
    .red { background: #ec6a5e; }
    .yellow { background: #f4bf4f; }
    .green { background: #61c554; }
    .rule { width: 2px; height: 36px; margin: 0 12px; background: #5c5b5a; }
    .back { margin-left: 52px; }
    .next { margin-left: 56px; }
    .url { display: grid; grid-template-columns: 96px 1fr 86px; align-items: center; height: 56px; border: 2px solid #6d6551; border-radius: 14px; padding-right: 10px; }
    .field { grid-column: 2; width: 100%; border: 0; padding: 0; outline: 0; background: none; color: #f4f4f2; font: 400 26px Inter, sans-serif; text-align: center; }
    .tools { display: flex; gap: 12px; justify-content: flex-end; }
    .right { display: flex; justify-content: flex-end; align-items: center; gap: 44px; height: 40px; margin: 0 -2px 4px 0; }
    .favs { display: flex; align-items: center; height: 62px; padding: 0 34px; }
    .fav { display: flex; align-items: center; gap: 11px; margin-right: 33px; font-weight: 500; font-size: 22px; line-height: 28px; color: inherit; text-decoration: none; white-space: nowrap; }
    .grid { margin-right: 108px; }
  `;

  render() {
    return html`
      <div class="bar">
        <div class="left">
          <div class="lights">
            <button class="light red" aria-label="Close"></button>
            <button class="light yellow" aria-label="Minimise"></button>
            <button class="light green" aria-label="Zoom"></button>
          </div>
          <button aria-label="Sidebar">
            <svg width="40" height="32" viewBox="0 0 40 32" fill="none" stroke="#c9c9c7" stroke-width="2.500"><rect x="1.500" y="1.500" width="37" height="29" rx="4"/><path d="M15 2V30M6 8H11M6 13H11M6 18H11"/></svg>
          </button>
          <span class="rule"></span>
          <button aria-label="Tab groups">
            <svg width="14" height="10" viewBox="0 0 14 10" fill="none" stroke="#f0f0ee" stroke-width="3"><path d="M1 1.500L7 8L13 1.500"/></svg>
          </button>
          <button class="back" aria-label="Back">
            <svg width="18" height="30" viewBox="0 0 18 30" fill="none" stroke="#cfcfcd" stroke-width="3"><path d="M16 2L3 15L16 28"/></svg>
          </button>
          <button class="next" aria-label="Forward">
            <svg width="18" height="30" viewBox="0 0 18 30" fill="none" stroke="#6b6a68" stroke-width="3"><path d="M2 2L15 15L2 28"/></svg>
          </button>
        </div>
        <div class="url">
          <input class="field" aria-label="Address" .value=${"localhost:8000/aboutus.php"}>
          <div class="tools">
            <button aria-label="Translate">
              <svg width="40" height="30" viewBox="0 0 40 30" fill="none" stroke="#e2e0da" stroke-width="2"><path d="M16 18L9 23V18H6Q2 18 2 14V6Q2 2 6 2H18Q22 2 22 6M8 14L12 5L16 14M9.500 11H14.500"/><path d="M23 7H34Q38 7 38 11V20Q38 24 34 24L34 29L28 24H22Q18 24 18 20V11Q18 7 23 7Z" fill="#e2e0da" stroke="none"/><path d="M22 12H34M28 9V12M24 21Q31 19 32 12M25 13Q26 19 33 21" stroke="#564f40"/></svg>
            </button>
            <button aria-label="Reload">
              <svg width="24" height="28" viewBox="0 0 24 28" fill="none" stroke="#e2e0da" stroke-width="2.300"><path d="M17 6.500H12A10 10 0 1 0 22 16.500M12 1L17.500 6.500L12 12"/></svg>
            </button>
          </div>
        </div>
        <div class="right">
          <button aria-label="Share">
            <svg width="30" height="38" viewBox="0 0 30 38" fill="none" stroke="#c4c3bf" stroke-width="2.500"><path d="M10 12H5Q1.500 12 1.500 15.500V33Q1.500 36.500 5 36.500H25Q28.500 36.500 28.500 33V15.500Q28.500 12 25 12H20M15 25V2M8.500 8.500L15 2L21.500 8.500"/></svg>
          </button>
          <button aria-label="New tab">
            <svg width="28" height="28" viewBox="0 0 28 28" stroke="#c4c3bf" stroke-width="2.500"><path d="M14 0V28M0 14H28"/></svg>
          </button>
          <button aria-label="Tabs">
            <svg width="36" height="36" viewBox="0 0 36 36" fill="none" stroke="#c4c3bf" stroke-width="2.500"><rect x="9" y="9" width="25.500" height="25.500" rx="4"/><path d="M9 26H5.500Q1.500 26 1.500 22V5.500Q1.500 1.500 5.500 1.500H22Q26 1.500 26 5.500V9"/></svg>
          </button>
        </div>
      </div>
      <nav class="favs" aria-label="Favourites">
        <button class="grid" aria-label="All favourites">
          <svg width="24" height="18" viewBox="0 0 24 18" fill="#bdbcba">
            ${[0, 7, 14].map((y) => [0, 7, 13, 20].map((x) => svg`<rect x=${x} y=${y} width="3" height="4"/>`))}
          </svg>
        </button>
        ${FAVORITES.map((f) => html`<a class="fav" href="#favourite">${f.icon}<span>${f.text}</span>${f.menu ? caret : ""}</a>`)}
      </nav>
    `;
  }
}

const PAGES = ["Login", "Home", "Products", "Contact", "About Us"];

@customElement("app-root")
export class AppRoot extends LitElement {
  static styles = css`
    :host { display: block; padding: 76px 112px 148px; background: #fff; }
    * { box-sizing: border-box; }
    .window { position: relative; overflow: hidden; border-radius: 20px; background: #535353; }
    .frame { border-radius: 20px; box-shadow: 0 0 0 1px #000, 0 36px 100px rgba(0, 0, 0, .66); }
    .window::after { content: ""; position: absolute; inset: 0; border-radius: 20px; border: 2px solid rgba(255, 255, 255, .2); pointer-events: none; }
    .page { width: 80%; margin: 0 auto; padding: 43px 0 67px; background: #ffffe3; color: #000; font: 40px/46px "Liberation Sans", Arial, sans-serif; }
    .menu { display: flex; background: #000; }
    .menu a { padding: 26px 40px 36px; color: #e9c46a; text-decoration: none; }
    .menu .here { background: #333; }
    .body { padding: 98px 100px 0; }
    h2 { margin: 0 0 48px; font-size: 60px; line-height: 70px; font-weight: 700; }
    p { margin: 0 0 102px; }
  `;

  render() {
    return html`
      <div class="frame">
        <div class="window">
          <browser-chrome></browser-chrome>
          <main class="page">
            <nav class="menu">
              ${PAGES.map((p) => html`<a href="#${p.toLowerCase().replace(" ", "")}" class=${classMap({ here: p === "About Us" })}>${p}</a>`)}
            </nav>
            <div class="body">
              <h2>About Us</h2>
              <p>Though Matthew's Fountain Pens is a very small pen storefront that started in 2023, we have been collecting, trading, fixing and converting fountain pens for years, which began in our home State of Colorado. Having attended a number of pen shows, you can meet us or a vendor that sells our products at any of the pen show events displayed here:</p>
              <pen-map></pen-map>
            </div>
          </main>
        </div>
      </div>
    `;
  }
}
